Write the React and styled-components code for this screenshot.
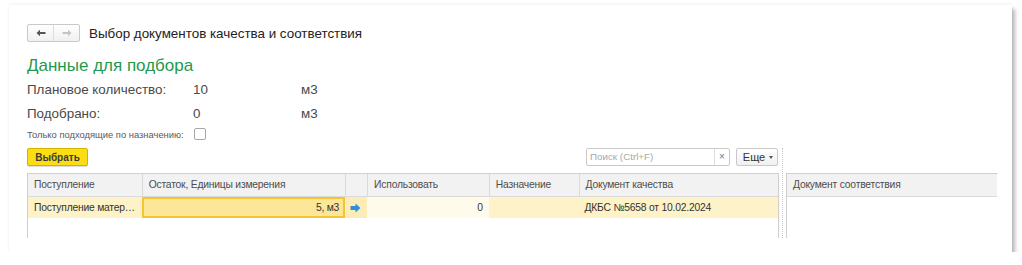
import React from "react";
import styled, { createGlobalStyle } from "styled-components";

const GlobalStyle = createGlobalStyle`
  body {
    margin: 0;
    background: #fff;
    font-family: "Liberation Sans", Arial, sans-serif;
    color: #333;
  }
`;

const leftCols = [
  { title: "Поступление", width: 114 },
  { title: "Остаток, Единицы измерения", width: 204 },
  { title: "", width: 22 },
  { title: "Использовать", width: 122 },
  { title: "Назначение", width: 90 },
  { title: "Документ качества", width: 200 },
];

const Page = styled.div`
  padding: 5px 0 0 9px;
`;

const Panel = styled.div`
  width: 1003px;
  height: 247px;
  box-sizing: border-box;
  padding: 19px 0 0 18px;
  background: #fff;
  overflow: hidden;
  box-shadow: 0 -1px 3px rgba(0, 0, 0, 0.06), 3px 4px 4px rgba(0, 0, 0, 0.28);
`;

const TitleBar = styled.div`
  display: flex;
  align-items: center;
  gap: 9px;
  height: 18px;
`;

const NavGroup = styled.div`
  display: flex;
  border: 1px solid #c9c9c9;
  border-radius: 2px;
  background: linear-gradient(#ffffff, #f0f0f0);
`;

const NavButton = styled.div`
  width: 25px;
  height: 16px;
  display: flex;
  align-items: center;
  justify-content: center;
  & + & {
    border-left: 1px solid #dcdcdc;
  }
`;

const Title = styled.div`
  font-size: 13.4px;
  color: #222;
`;

const SectionTitle = styled.div`
  margin-top: 14px;
  font-size: 17px;
  line-height: 20px;
  color: #1f9a4b;
`;

const InfoGrid = styled.div`
  margin-top: 1px;
  display: grid;
  grid-template-columns: 166px 108px auto;
  grid-auto-rows: 24px;
  align-items: center;
  font-size: 13.4px;
  color: #4a4a4a;
`;

const CheckRow = styled.div`
  margin-top: -2px;
  height: 22px;
  display: flex;
  align-items: center;
  font-size: 9.4px;
  color: #5a5a5a;
  white-space: nowrap;
`;

const CheckLabel = styled.span`
  width: 167px;
`;

const CheckBox = styled.span`
  width: 10px;
  height: 10px;
  border: 1px solid #a8a8a8;
  border-radius: 2px;
  background: #fff;
`;

const Split = styled.div`
  margin-top: 3px;
  display: flex;
  height: 90px;
  overflow: hidden;
`;

const LeftPart = styled.div`
  width: 752px;
  display: flex;
  flex-direction: column;
`;

const Separator = styled.div`
  margin: 0 3px 0 3px;
  border-left: 1px dotted #c4c4c4;
`;

const RightPart = styled.div`
  padding-top: 25px;
  width: 212px;
  display: flex;
  flex-direction: column;
`;

const Toolbar = styled.div`
  display: flex;
  align-items: center;
  height: 18px;
  margin-bottom: 7px;
`;

const MainButton = styled.button`
  height: 18px;
  width: 61px;
  padding: 0;
  border: 1px solid #d4b300;
  border-radius: 2px;
  background: #fbdd13;
  font-family: inherit;
  font-size: 10px;
  font-weight: bold;
  color: #3a3a3a;
  box-shadow: 0 1px 1px rgba(0, 0, 0, 0.15);
`;

const Search = styled.div`
  margin-left: auto;
  width: 144px;
  height: 18px;
  box-sizing: border-box;
  display: flex;
  border: 1px solid #c9c9c9;
  border-radius: 2px;
  background: #fff;
`;

const SearchText = styled.div`
  flex: 1;
  padding-left: 3px;
  font-size: 9.8px;
  line-height: 16px;
  color: #a9a9a9;
`;

const SearchClear = styled.div`
  width: 14px;
  border-left: 1px solid #dcdcdc;
  font-size: 10px;
  line-height: 16px;
  text-align: center;
  color: #777;
`;

const MoreButton = styled.div`
  margin-left: 6px;
  margin-right: 1px;
  width: 42px;
  height: 18px;
  box-sizing: border-box;
  border: 1px solid #c9c9c9;
  border-radius: 2px;
  background: linear-gradient(#ffffff, #f0f0f0);
  display: flex;
  align-items: center;
  justify-content: center;
  gap: 4px;
  padding-left: 2px;
  font-size: 11px;
  color: #333;
`;

const Caret = styled.span`
  width: 0;
  height: 0;
  border-left: 2.5px solid transparent;
  border-right: 2.5px solid transparent;
  border-top: 3px solid #555;
`;

const Table = styled.div`
  border: 1px solid #cfcfcf;
  border-bottom: none;
  border-right-color: ${(p) => (p.$open ? "transparent" : "#cfcfcf")};
  flex: 1;
`;

const HeadRow = styled.div`
  display: flex;
  height: 22px;
  background: #f2f2f2;
  border-bottom: 1px solid #dadada;
`;

const HeadCell = styled.div`
  width: ${(p) => p.$w}px;
  box-sizing: border-box;
  padding-left: 6px;
  font-size: 10.3px;
  letter-spacing: -0.2px;
  line-height: 22px;
  color: #4d4d4d;
  white-space: nowrap;
  overflow: hidden;
  & + & {
    border-left: 1px solid #dadada;
  }
`;

const DataRow = styled.div`
  display: flex;
  height: 21px;
  background: #fdf2c8;
`;

const Cell = styled.div`
  width: ${(p) => p.$w}px;
  box-sizing: border-box;
  padding: 0 6px 0 6px;
  font-size: 10.3px;
  letter-spacing: -0.2px;
  line-height: 21px;
  color: #333;
  white-space: nowrap;
  overflow: hidden;
  text-overflow: ellipsis;
  text-align: ${(p) => (p.$right ? "right" : "left")};
  background: ${(p) => p.$bg || "transparent"};
`;

const ActiveCell = styled(Cell)`
  border: 2px solid #f4c433;
  background: #fce697;
  line-height: 17px;
  padding-right: 4px;
`;

const IconCell = styled(Cell)`
  display: flex;
  align-items: center;
  padding: 0 0 0 5px;
  background: #fcecb7;
`;

const BackArrow = ({ color }) => (
  <svg width="10" height="8" viewBox="0 0 10 8">
    <path d="M0.5 4 L4 0.8 L4 3 L9.5 3 L9.5 5 L4 5 L4 7.2 Z" fill={color} />
  </svg>
);

const ForwardArrow = ({ color }) => (
  <svg width="10" height="8" viewBox="0 0 10 8">
    <path d="M9.5 4 L6 0.8 L6 3 L0.5 3 L0.5 5 L6 5 L6 7.2 Z" fill={color} />
  </svg>
);

const BlueArrow = () => (
  <svg width="11" height="10" viewBox="0 0 11 10">
    <path d="M0.5 3 L5.5 3 L5.5 0.5 L10.5 5 L5.5 9.5 L5.5 7 L0.5 7 Z" fill="#2f8ee0" />
  </svg>
);

const App = () => {
  return (
    <Page>
      <GlobalStyle />
      <Panel>
        <TitleBar>
          <NavGroup>
            <NavButton>
              <BackArrow color="#555" />
            </NavButton>
            <NavButton>
              <ForwardArrow color="#c4c4c4" />
            </NavButton>
          </NavGroup>
          <Title>Выбор документов качества и соответствия</Title>
        </TitleBar>

        <SectionTitle>Данные для подбора</SectionTitle>
        <InfoGrid>
          <span>Плановое количество:</span>
          <span>10</span>
          <span>м3</span>
          <span>Подобрано:</span>
          <span>0</span>
          <span>м3</span>
        </InfoGrid>
        <CheckRow>
          <CheckLabel>Только подходящие по назначению:</CheckLabel>
          <CheckBox />
        </CheckRow>

        <Split>
          <LeftPart>
            <Toolbar>
              <MainButton>Выбрать</MainButton>
              <Search>
                <SearchText>Поиск (Ctrl+F)</SearchText>
                <SearchClear>×</SearchClear>
              </Search>
              <MoreButton>
                Еще <Caret />
              </MoreButton>
            </Toolbar>
            <Table>
              <HeadRow>
                {leftCols.map((c, i) => (
                  <HeadCell key={i} $w={c.width}>
                    {c.title}
                  </HeadCell>
                ))}
              </HeadRow>
              <DataRow>
                <Cell $w={114}>Поступление материалов</Cell>
                <ActiveCell $w={204} $right>
                  5, м3
                </ActiveCell>
                <IconCell $w={22}>
                  <BlueArrow />
                </IconCell>
                <Cell $w={122} $right $bg="#fffbea">
                  0
                </Cell>
                <Cell $w={90} />
                <Cell $w={200}>ДКБС №5658 от 10.02.2024</Cell>
              </DataRow>
            </Table>
          </LeftPart>
          <Separator />
          <RightPart>
            <Table $open>
              <HeadRow>
                <HeadCell $w={212}>Документ соответствия</HeadCell>
              </HeadRow>
            </Table>
          </RightPart>
        </Split>
      </Panel>
    </Page>
  );
};

export default App;
